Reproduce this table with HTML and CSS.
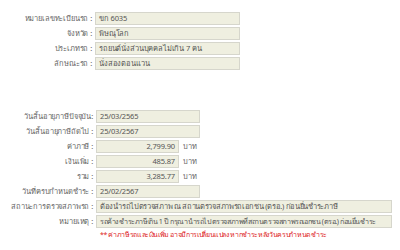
FILE: index.html
```html
<!DOCTYPE html>
<html lang="th">
<head>
<meta charset="utf-8">
<title>ข้อมูลรถ</title>
<link rel="stylesheet" href="styles.css">
</head>
<body>
<div class="page">
  <div class="form top">
    <div class="label">หมายเลขทะเบียนรถ :</div>
    <div class="field w-top">ขก 6035</div>
    <div class="label">จังหวัด :</div>
    <div class="field w-top">พิษณุโลก</div>
    <div class="label">ประเภทรถ :</div>
    <div class="field w-top">รถยนต์นั่งส่วนบุคคลไม่เกิน 7 คน</div>
    <div class="label">ลักษณะรถ :</div>
    <div class="field w-top">นั่งสองตอนแวน</div>
  </div>

  <div class="form mid">
    <div class="label">วันสิ้นอายุภาษีปัจจุบัน:</div>
    <div class="field w-date">25/03/2565</div>
    <div class="label">วันสิ้นอายุภาษีถัดไป :</div>
    <div class="field w-date">25/03/2567</div>
    <div class="label">ค่าภาษี :</div>
    <div class="money"><div class="field w-num num">2,799.90</div><span class="unit">บาท</span></div>
    <div class="label">เงินเพิ่ม :</div>
    <div class="money"><div class="field w-num num">485.87</div><span class="unit">บาท</span></div>
    <div class="label">รวม :</div>
    <div class="money"><div class="field w-num num">3,285.77</div><span class="unit">บาท</span></div>
    <div class="label">วันที่ครบกำหนดชำระ :</div>
    <div class="field w-date">25/02/2567</div>
    <div class="label">สถานะการตรวจสภาพรถ :</div>
    <div class="field w-wide tight">ต้องนำรถไปตรวจสภาพ ณ สถานตรวจสภาพรถเอกชน (ตรอ.) ก่อนยื่นชำระภาษี</div>
    <div class="label">หมายเหตุ :</div>
    <div class="field w-wide tighter">รถค้างชำระภาษีเกิน 1 ปี กรุณานำรถไปตรวจสภาพที่สถานตรวจสภาพรถเอกชน (ตรอ.) ก่อนยื่นชำระ</div>
    <div class="label"></div>
    <div class="note">** ค่าภาษีรถและเงินเพิ่ม อาจมีการเปลี่ยนแปลง หากชำระหลังวันครบกำหนดชำระ</div>
  </div>
</div>
</body>
</html>
```

FILE: styles.css
```css
html, body {
  margin: 0;
  padding: 0;
  background: #ffffff;
}

body {
  font-family: Tahoma, "Noto Sans", "DejaVu Sans", sans-serif;
  font-size: 7.5px;
  letter-spacing: -0.15px;
  color: #555555;
}

.page {
  padding-top: 12px;
}

.form {
  display: grid;
  grid-template-columns: 95px auto;
  row-gap: 2px;
  align-items: center;
  justify-items: start;
}

.mid {
  margin-top: 40px;
  grid-template-columns: 96px auto;
}

.label {
  justify-self: end;
  padding-right: 3px;
  color: #666666;
  white-space: nowrap;
  line-height: 13px;
}

.field {
  box-sizing: border-box;
  height: 13px;
  line-height: 11px;
  padding: 0 3px;
  background: #efefe0;
  border: 1px solid #d6d6cc;
  color: #555555;
  white-space: nowrap;
  overflow: hidden;
}

.tight {
  letter-spacing: -0.3px;
  padding: 0 2px 0 3px;
}

.tighter {
  font-size: 7.2px;
  letter-spacing: -0.4px;
  padding: 0 1px 0 3px;
}

.w-top { width: 145px; }
.w-date { width: 104px; }
.w-num { width: 83px; }
.w-wide { width: 296px; }

.num { text-align: right; }

.money {
  display: flex;
  align-items: center;
  gap: 4px;
}

.unit {
  color: #666666;
  line-height: 13px;
}

.note {
  color: #dd2222;
  font-size: 7px;
  letter-spacing: -0.35px;
  padding-left: 4px;
  line-height: 10px;
  margin-top: 0;
  white-space: nowrap;
}
```
